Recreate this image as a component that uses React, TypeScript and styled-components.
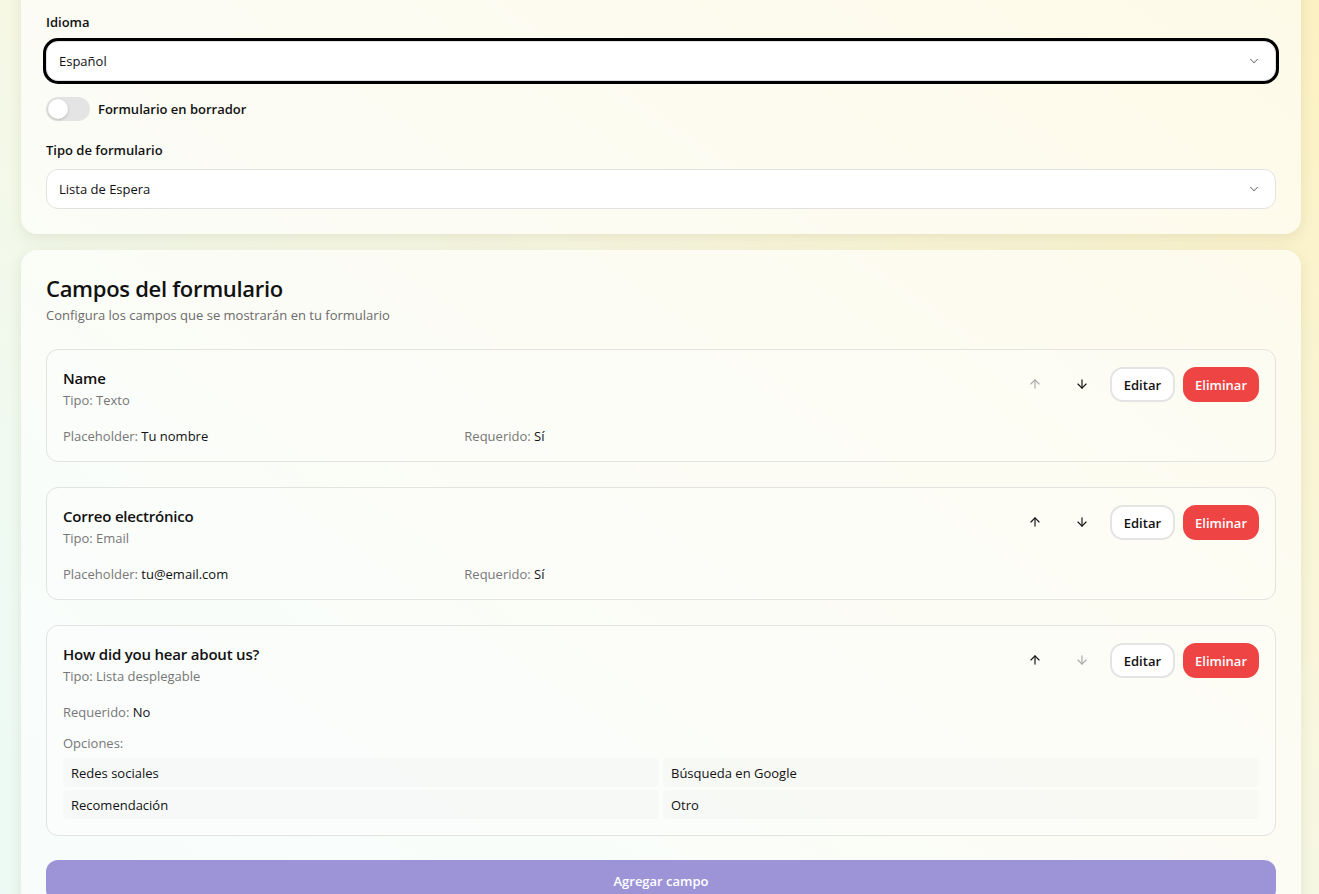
import styled, { createGlobalStyle } from "styled-components";

const GlobalStyle = createGlobalStyle`
  * { box-sizing: border-box; }
  html, body { margin: 0; padding: 0; }
  body {
    font-family: "Open Sans", "Noto Sans", "Liberation Sans", sans-serif;
    color: #111;
    background: linear-gradient(215deg, #fcf1c2 0%, #f8f7e0 40%, #eefaf3 80%, #ecf9f4 100%);
    min-height: 100vh;
    overflow: hidden;
  }
`;

const Page = styled.div`
  padding: 0 18px 40px 21px;
  display: flex;
  flex-direction: column;
  gap: 16px;
  margin-top: -33px;
`;

const Card = styled.section`
  width: 1280px;
  background: rgba(255, 255, 255, 0.62);
  border-radius: 16px;
  box-shadow: 0 4px 14px rgba(90, 90, 40, 0.12);
  padding: 23px 25px 25px;
`;

const SettingsCard = styled(Card)`
  padding-top: 46px;
`;

const Label = styled.div`
  font-size: 13px;
  font-weight: 600;
  line-height: 18px;
  margin-bottom: 10px;
`;

const Select = styled.div<{ $focused?: boolean }>`
  height: 40px;
  display: flex;
  align-items: center;
  justify-content: space-between;
  padding: 0 14px 0 12px;
  background: #fff;
  border: 1px solid #e2e2e2;
  border-radius: 12px;
  font-size: 13px;
  box-shadow: ${({ $focused }) => ($focused ? "0 0 0 3px #000" : "none")};
`;

const Chevron = () => (
  <svg width="14" height="14" viewBox="0 0 24 24" fill="none" stroke="#777" strokeWidth="1.8" strokeLinecap="round" strokeLinejoin="round">
    <path d="m6 9 6 6 6-6" />
  </svg>
);

const ToggleRow = styled.div`
  display: flex;
  align-items: center;
  gap: 8px;
  margin: 16px 0 20px;
`;

const Track = styled.div`
  width: 44px;
  height: 24px;
  border-radius: 12px;
  background: #e4e4e4;
  padding: 2px;
  display: flex;
  align-items: center;
`;

const Thumb = styled.div`
  width: 20px;
  height: 20px;
  border-radius: 50%;
  background: #fff;
  box-shadow: 0 1px 3px rgba(0, 0, 0, 0.2);
`;

const ToggleLabel = styled.span`
  font-size: 13px;
  font-weight: 600;
`;

const Title = styled.h2`
  margin: 0;
  font-size: 22px;
  font-weight: 600;
  line-height: 30px;
  letter-spacing: -0.3px;
`;

const Subtitle = styled.p`
  margin: 3px 0 25px;
  font-size: 13px;
  color: #6b6b6b;
  line-height: 18px;
`;

const FieldList = styled.div`
  display: flex;
  flex-direction: column;
  gap: 25px;
`;

const FieldCard = styled.div`
  border: 1px solid #e3e3e0;
  border-radius: 12px;
  padding: 16px;
  background: rgba(255, 255, 255, 0.25);
`;

const FieldHead = styled.div`
  display: flex;
  justify-content: space-between;
  align-items: flex-start;
`;

const FieldName = styled.div`
  font-size: 15px;
  font-weight: 600;
  line-height: 24px;
  letter-spacing: -0.2px;
`;

const FieldType = styled.div`
  font-size: 13px;
  color: #777;
  line-height: 20px;
`;

const Actions = styled.div`
  display: flex;
  gap: 8px;
  margin-top: 1px;
`;

const IconButton = styled.button<{ $disabled?: boolean }>`
  width: 39px;
  height: 34px;
  border: none;
  background: transparent;
  display: flex;
  align-items: center;
  justify-content: center;
  color: ${({ $disabled }) => ($disabled ? "#a8a8a8" : "#111")};
  padding: 0;
`;

const Button = styled.button<{ $danger?: boolean }>`
  height: 35px;
  padding: 0 ${({ $danger }) => ($danger ? "10px" : "12px")};
  border-radius: 13px;
  font-family: inherit;
  font-size: 13px;
  font-weight: 600;
  border: 2px solid ${({ $danger }) => ($danger ? "#ef4444" : "#e4e4e4")};
  background: ${({ $danger }) => ($danger ? "#ef4444" : "#fff")};
  color: ${({ $danger }) => ($danger ? "#fff" : "#111")};
`;

const Details = styled.div`
  display: grid;
  grid-template-columns: repeat(3, 1fr);
  gap: 8px;
  margin-top: 17px;
`;

const Detail = styled.div`
  font-size: 13px;
  line-height: 18px;
  color: #111;
`;

const Muted = styled.span`
  color: #777;
`;

const OptionsLabel = styled.div`
  font-size: 13px;
  color: #777;
  line-height: 18px;
  margin-top: 13px;
`;

const OptionsGrid = styled.div`
  display: grid;
  grid-template-columns: 1fr 1fr;
  gap: 3px 4px;
  margin-top: 6px;
`;

const OptionItem = styled.div`
  height: 29px;
  display: flex;
  align-items: center;
  padding: 0 8px;
  font-size: 13px;
  background: rgba(0, 0, 0, 0.014);
  border-radius: 4px;
`;

const AddButton = styled.button`
  width: 100%;
  height: 42px;
  margin-top: 24px;
  border: none;
  border-radius: 12px;
  background: #9d94d8;
  color: #fff;
  font-family: inherit;
  font-size: 13px;
  font-weight: 600;
`;

const Arrow = ({ up }: { up?: boolean }) => (
  <svg width="14" height="14" viewBox="0 0 24 24" fill="none" stroke="currentColor" strokeWidth="2" strokeLinecap="round" strokeLinejoin="round">
    {up ? (
      <>
        <path d="m5 12 7-7 7 7" />
        <path d="M12 19V5" />
      </>
    ) : (
      <>
        <path d="M12 5v14" />
        <path d="m19 12-7 7-7-7" />
      </>
    )}
  </svg>
);

type Field = {
  name: string;
  type: string;
  placeholder?: string;
  required: boolean;
  options?: string[];
};

const fields: Field[] = [
  { name: "Name", type: "Texto", placeholder: "Tu nombre", required: true },
  { name: "Correo electrónico", type: "Email", placeholder: "tu@email.com", required: true },
  {
    name: "How did you hear about us?",
    type: "Lista desplegable",
    required: false,
    options: ["Redes sociales", "Búsqueda en Google", "Recomendación", "Otro"],
  },
];

const FieldRow = ({ field, index, total }: { field: Field; index: number; total: number }) => (
  <FieldCard>
    <FieldHead>
      <div>
        <FieldName>{field.name}</FieldName>
        <FieldType>Tipo: {field.type}</FieldType>
      </div>
      <Actions>
        <IconButton $disabled={index === 0}>
          <Arrow up />
        </IconButton>
        <IconButton $disabled={index === total - 1}>
          <Arrow />
        </IconButton>
        <Button>Editar</Button>
        <Button $danger>Eliminar</Button>
      </Actions>
    </FieldHead>
    <Details>
      {field.placeholder ? (
        <Detail>
          <Muted>Placeholder:</Muted> {field.placeholder}
        </Detail>
      ) : null}
      <Detail>
        <Muted>Requerido:</Muted> {field.required ? "Sí" : "No"}
      </Detail>
    </Details>
    {field.options ? (
      <>
        <OptionsLabel>Opciones:</OptionsLabel>
        <OptionsGrid>
          {field.options.map((o) => (
            <OptionItem key={o}>{o}</OptionItem>
          ))}
        </OptionsGrid>
      </>
    ) : null}
  </FieldCard>
);

export default function App() {
  return (
    <>
      <GlobalStyle />
      <Page>
        <SettingsCard>
          <Label>Idioma</Label>
          <Select $focused>
            <span>Español</span>
            <Chevron />
          </Select>
          <ToggleRow>
            <Track>
              <Thumb />
            </Track>
            <ToggleLabel>Formulario en borrador</ToggleLabel>
          </ToggleRow>
          <Label>Tipo de formulario</Label>
          <Select>
            <span>Lista de Espera</span>
            <Chevron />
          </Select>
        </SettingsCard>
        <Card>
          <Title>Campos del formulario</Title>
          <Subtitle>Configura los campos que se mostrarán en tu formulario</Subtitle>
          <FieldList>
            {fields.map((f, i) => (
              <FieldRow key={f.name} field={f} index={i} total={fields.length} />
            ))}
          </FieldList>
          <AddButton>Agregar campo</AddButton>
        </Card>
      </Page>
    </>
  );
}
